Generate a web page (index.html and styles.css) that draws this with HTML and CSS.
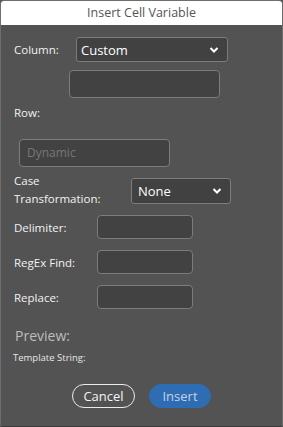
FILE: index.html
```html
<!DOCTYPE html>
<html lang="en">
<head>
  <meta charset="UTF-8">
  <title>Insert Cell Variable</title>
  <link rel="stylesheet" href="styles.css">
</head>
<body>
  <div class="window">
    <header class="titlebar">Insert Cell Variable</header>
    <main class="content">
      <div class="row row-column">
        <label class="label">Column:</label>
        <div class="select select-column">
          <span>Custom</span>
          <svg class="chevron" width="10" height="6" viewBox="0 0 10 6"><path d="M1.5 1 L5 4.5 L8.5 1" fill="none" stroke="#fff" stroke-width="2"/></svg>
        </div>
      </div>
      <div class="field field-custom"></div>

      <div class="label label-row">Row:</div>
      <div class="field field-dynamic">Dynamic</div>

      <div class="row row-case">
        <label class="label label-case">Case<br>Transformation:</label>
        <div class="select select-case">
          <span>None</span>
          <svg class="chevron" width="10" height="6" viewBox="0 0 10 6"><path d="M1.5 1 L5 4.5 L8.5 1" fill="none" stroke="#fff" stroke-width="2"/></svg>
        </div>
      </div>

      <div class="row row-small">
        <label class="label label-wide">Delimiter:</label>
        <div class="field field-small"></div>
      </div>
      <div class="row row-small">
        <label class="label label-wide">RegEx Find:</label>
        <div class="field field-small"></div>
      </div>
      <div class="row row-small">
        <label class="label label-wide">Replace:</label>
        <div class="field field-small"></div>
      </div>

      <div class="preview">Preview:</div>
      <div class="template">Template String:</div>

      <div class="buttons">
        <button class="btn btn-cancel">Cancel</button>
        <button class="btn btn-insert">Insert</button>
      </div>
    </main>
  </div>
</body>
</html>
```

FILE: styles.css
```css
body {
  margin: 0;
  padding: 0;
  background: #535353;
  font-family: 'Open Sans', 'Noto Sans', sans-serif;
}

.window {
  width: 283px;
  height: 427px;
  box-sizing: border-box;
  border: 1px solid #6e6e6e;
  border-bottom-color: #3a3a3a;
  border-radius: 4px;
  background: #535353;
  overflow: hidden;
  color: #f2f2f2;
}

.titlebar {
  height: 24px;
  line-height: 24px;
  background: #fff;
  color: #555;
  text-align: center;
  font-size: 12.5px;
}

.content {
  padding: 12px 0 0 13px;
}

.row {
  display: flex;
  align-items: center;
}

.label {
  font-size: 11.5px;
  color: #f2f2f2;
}

.row-column .label {
  width: 62px;
}

.select {
  box-sizing: border-box;
  display: flex;
  align-items: center;
  justify-content: space-between;
  background: #414141;
  border: 1px solid #7c7c7c;
  border-radius: 3px;
  font-size: 13px;
  color: #fff;
  padding: 0 8px 0 4px;
}

.select-column {
  width: 152px;
  height: 25px;
}

.field {
  box-sizing: border-box;
  background: #424242;
  border: 1px solid #7c7c7c;
  border-radius: 4px;
}

.field-custom {
  width: 151px;
  height: 28px;
  margin: 8px 0 0 55px;
}

.label-row {
  margin-top: 7px;
  line-height: 16px;
}

.field-dynamic {
  width: 151px;
  height: 28px;
  margin: 18px 0 0 5px;
  padding-left: 7px;
  line-height: 26px;
  font-size: 12px;
  color: #777;
}

.row-case {
  margin-top: 6px;
}

.label-case {
  width: 117px;
  line-height: 18px;
  margin-top: -1px;
}

.select-case {
  width: 100px;
  height: 26px;
  padding-left: 6px;
}

.row-small {
  margin-top: 11px;
}

.row-case + .row-small {
  margin-top: 7px;
}

.label-wide {
  width: 83px;
}

.field-small {
  width: 96px;
  height: 24px;
}

.preview {
  margin: 17px 0 0 1px;
  font-size: 14px;
  color: #bdbdbd;
}

.template {
  margin: 6px 0 0 -1px;
  font-size: 9.5px;
  color: #e6e6e6;
}

.buttons {
  display: flex;
  justify-content: center;
  gap: 14px;
  margin: 20px 0 0 -13px;
}

.btn {
  height: 24px;
  border-radius: 12px;
  font-family: inherit;
  font-size: 13px;
  padding: 0;
  box-sizing: border-box;
}

.btn-cancel {
  width: 63px;
  background: transparent;
  border: 1px solid #ececec;
  color: #f4f4f4;
}

.btn-insert {
  width: 62px;
  background: #2e6db4;
  border: 1px solid #2e6db4;
  color: #c3d1e6;
}
```
